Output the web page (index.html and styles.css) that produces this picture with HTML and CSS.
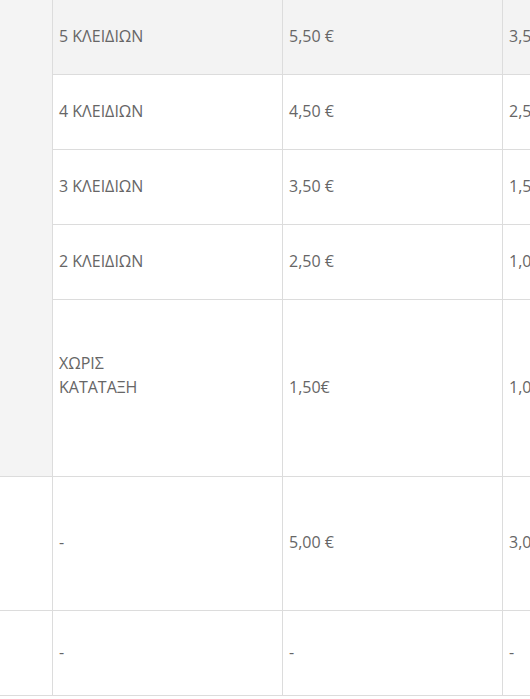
FILE: index.html
```html
<!DOCTYPE html>
<html lang="el">
<head>
<meta charset="utf-8">
<link rel="stylesheet" href="styles.css">
</head>
<body>
<div class="table">
  <div class="cell group r1-5"></div>
  <div class="cell odd">5 ΚΛΕΙΔΙΩΝ</div>
  <div class="cell odd">5,50 €</div>
  <div class="cell odd last">3,50 €</div>

  <div class="cell">4 ΚΛΕΙΔΙΩΝ</div>
  <div class="cell">4,50 €</div>
  <div class="cell last">2,50 €</div>

  <div class="cell">3 ΚΛΕΙΔΙΩΝ</div>
  <div class="cell">3,50 €</div>
  <div class="cell last">1,50 €</div>

  <div class="cell">2 ΚΛΕΙΔΙΩΝ</div>
  <div class="cell">2,50 €</div>
  <div class="cell last">1,00 €</div>

  <div class="cell"><span>ΧΩΡΙΣ</span><span>ΚΑΤΑΤΑΞΗ</span><span class="blank">&nbsp;</span></div>
  <div class="cell">1,50€</div>
  <div class="cell last">1,00€</div>

  <div class="cell"></div>
  <div class="cell">-</div>
  <div class="cell">5,00 €</div>
  <div class="cell last">3,00 €</div>

  <div class="cell"></div>
  <div class="cell">-</div>
  <div class="cell">-</div>
  <div class="cell last">-</div>
</div>
</body>
</html>
```
FILE: styles.css
```css
html, body {
  margin: 0;
  padding: 0;
  background: #ffffff;
  overflow: hidden;
}
body {
  width: 530px;
  height: 699px;
  font-family: "Open Sans", "Noto Sans", sans-serif;
  font-size: 16px;
  line-height: 24px;
  color: #666666;
}
.table {
  display: grid;
  grid-template-columns: 53px 230px 220px 200px;
  grid-template-rows: 75px 75px 75px 75px 177px 134px 85px;
  width: 703px;
}
.cell {
  box-sizing: border-box;
  border-right: 1px solid #dcdcdc;
  border-bottom: 1px solid #dcdcdc;
  padding: 0 6px 3px;
  display: flex;
  flex-direction: column;
  justify-content: center;
  white-space: nowrap;
}
.cell.last {
  border-right: none;
}
.group {
  background: #f4f4f4;
}
.r1-5 {
  grid-row: 1 / span 5;
}
.odd {
  background: #f3f3f3;
}
```
